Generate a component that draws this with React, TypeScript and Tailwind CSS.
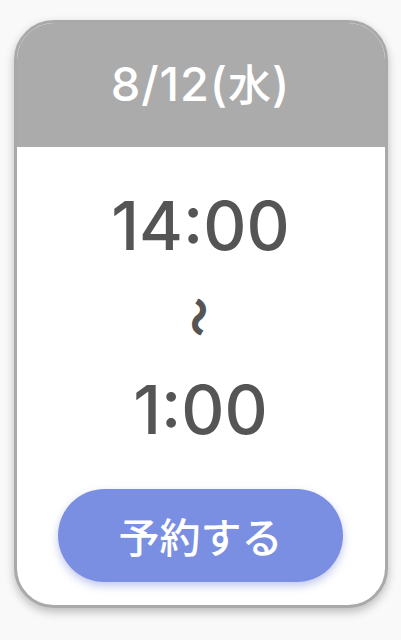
export default function App() {
  return (
    <div className="flex h-[640px] w-[401px] items-start justify-center bg-[#f9f9f9] pt-[20px] font-['Inter','Noto_Sans_CJK_JP',sans-serif]">
      <div className="flex h-[588px] w-[374px] flex-col overflow-hidden rounded-[40px] border-[3px] border-[#a9a9a9] bg-white shadow-[0_4px_10px_rgba(0,0,0,0.25)]">
        <div className="flex h-[124px] shrink-0 items-center justify-center bg-[#ababab] pb-[4px]">
          <span className="text-[47px] font-medium leading-none tracking-[0.02em] text-white">
            8/12(<span className="font-['Noto_Sans_CJK_JP'] text-[43px]">水</span>)
          </span>
        </div>
        <div className="flex flex-1 flex-col items-center">
          <span className="mt-[45px] text-[67px] font-medium leading-none text-[#555555]">
            14:00
          </span>
          <span className="mt-[38px] rotate-90 font-['Noto_Sans_CJK_JP'] text-[40px] font-black leading-none text-[#555555]">
            〜
          </span>
          <span className="mt-[39px] text-[67px] font-medium leading-none text-[#555555]">
            1:00
          </span>
          <button className="mt-[46px] flex h-[93px] w-[285px] items-center justify-center rounded-full bg-[#7a8fe2] font-['Noto_Sans_CJK_JP'] text-[41px] font-medium text-white shadow-[0_4px_8px_rgba(80,100,200,0.35)]">
            予約する
          </button>
        </div>
      </div>
    </div>
  );
}
